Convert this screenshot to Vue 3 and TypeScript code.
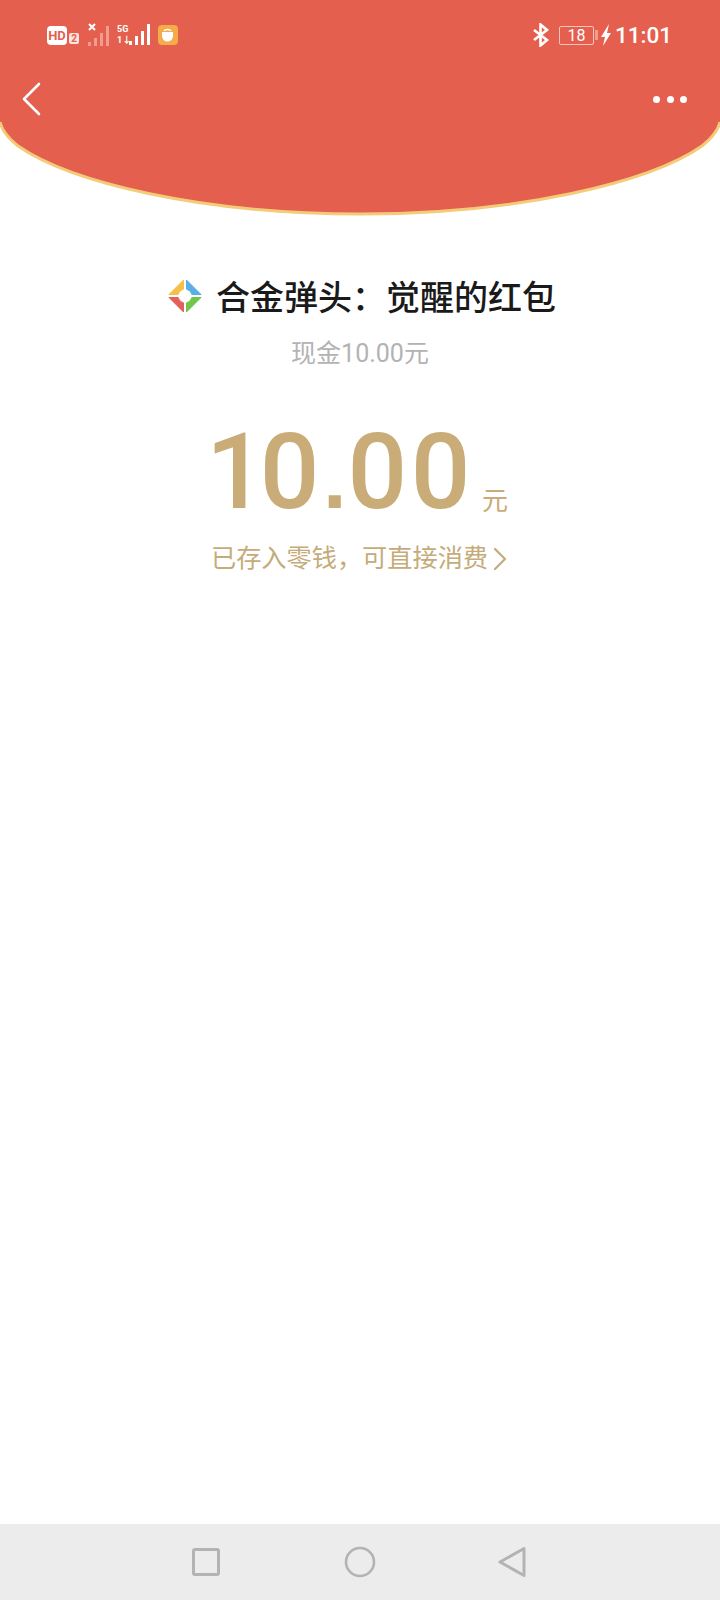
<template>
  <div class="page">
    <header class="hero">
      <svg class="hero-bg" width="720" height="218" viewBox="0 0 720 218">
        <path d="M0 0H720V122C718 130 712 138 702 146C650 182 520 214 360 214C200 214 70 182 18 146C8 138 2 130 0 122Z" fill="#e55f4e" />
        <path d="M0 122C2 130 8 138 18 146C70 182 200 214 360 214C520 214 650 182 702 146C712 138 718 130 720 122" fill="none" stroke="#f3cb79" stroke-width="3" />
      </svg>

      <!-- 状态栏 -->
      <div class="status">
        <div class="status-left">
          <span class="hd">HD</span>
          <span class="hd-sub">2</span>
          <svg class="signal" width="26" height="24" viewBox="0 0 26 24">
            <path d="M3 1l6 6M9 1L3 7" stroke="#fff" stroke-width="2" />
            <g fill="#f29c90">
              <rect x="2" y="19" width="3" height="4" />
              <rect x="8" y="15" width="3" height="8" />
              <rect x="14" y="10" width="3" height="13" />
              <rect x="20" y="3" width="3" height="20" />
            </g>
          </svg>
          <span class="net">
            <span class="net-text">5G<br />1↓</span>
            <svg width="22" height="22" viewBox="0 0 22 22">
              <g fill="#fff">
                <rect x="0" y="17" width="3" height="4" />
                <rect x="6" y="12" width="3" height="9" />
                <rect x="12" y="7" width="3" height="14" />
                <rect x="18" y="0" width="3" height="21" />
              </g>
            </svg>
          </span>
          <svg class="cup" width="20" height="20" viewBox="0 0 20 20">
            <rect width="20" height="20" rx="4" fill="#f4ab4a" />
            <path d="M4 7h11v4a5.500 5.500 0 0 1-11 0z" fill="#fff" />
            <path d="M6 6c1-2 6-2 7 0" stroke="#fff" stroke-width="1.500" fill="none" />
          </svg>
        </div>
        <div class="status-right">
          <svg width="18" height="24" viewBox="0 0 18 24">
            <path d="M2 7l13 10-6.500 5.500V1.500L15 7 2 17" fill="none" stroke="#fff" stroke-width="2.600" />
          </svg>
          <span class="battery">18</span>
          <span class="battery-cap"></span>
          <svg width="12" height="24" viewBox="0 0 12 24">
            <path d="M9 1L1 14h4l-2 9 8-13H7z" fill="#fff" />
          </svg>
          <span class="time">11:01</span>
        </div>
      </div>

      <!-- 导航 -->
      <div class="nav">
        <svg width="20" height="34" viewBox="0 0 20 34">
          <path d="M17 2L2 17l15 15" fill="none" stroke="#fff" stroke-width="2.600" stroke-linecap="round" stroke-linejoin="round" />
        </svg>
        <div class="dots"><i></i><i></i><i></i></div>
      </div>
    </header>

    <main class="main">
      <div class="title-row">
        <svg class="logo" width="34" height="34" viewBox="0 0 34 34">
          <g stroke-width="1" stroke-linejoin="round">
            <path d="M15.500 1V10.160A7 7 0 0 0 10.160 15.500H1Z" fill="#f5c04a" stroke="#f5c04a" />
            <path d="M18.500 1L33 15.500H23.840A7 7 0 0 0 18.500 10.160Z" fill="#5aaee6" stroke="#5aaee6" />
            <path d="M1 18.500H10.160A7 7 0 0 0 15.500 23.840V33Z" fill="#e3605f" stroke="#e3605f" />
            <path d="M18.500 33V23.840A7 7 0 0 0 23.840 18.500H33Z" fill="#71c64a" stroke="#71c64a" />
          </g>
        </svg>
        <h1 class="title">合金弹头：觉醒的红包</h1>
      </div>
      <p class="sub">现金10.00元</p>
      <div class="amount">
        <span class="num"><span class="one">1</span>0<span class="dot">.</span>00</span>
        <span class="unit">元</span>
      </div>
      <div class="note">
        <span>已存入零钱，可直接消费</span>
        <svg width="14" height="24" viewBox="0 0 14 24">
          <path d="M2 2l10 10L2 22" fill="none" stroke="#c5ab79" stroke-width="2.200" stroke-linecap="round" stroke-linejoin="round" />
        </svg>
      </div>
    </main>

    <footer class="navbar">
      <svg width="28" height="28" viewBox="0 0 28 28">
        <rect x="1.500" y="1.500" width="25" height="25" rx="1.500" fill="none" stroke="#b3b3b3" stroke-width="3" />
      </svg>
      <svg width="32" height="32" viewBox="0 0 32 32">
        <circle cx="16" cy="16" r="14" fill="none" stroke="#b3b3b3" stroke-width="2.600" />
      </svg>
      <svg class="back" width="28" height="32" viewBox="0 0 28 32">
        <path d="M26 2.500V29.500L2 16Z" fill="none" stroke="#b3b3b3" stroke-width="3" stroke-linejoin="round" />
      </svg>
    </footer>
  </div>
</template>

<script setup lang="ts">
</script>

<style scoped>
.page {
  width: 720px;
  min-height: 1600px;
  display: flex;
  flex-direction: column;
  background: #fff;
  font-family: Roboto, "Noto Sans CJK SC", sans-serif;
}

.hero {
  position: relative;
  height: 216px;
}

.hero-bg {
  position: absolute;
  left: 0;
  top: 0;
}

.status {
  position: relative;
  height: 24px;
  padding: 23px 48px 0 47px;
  display: flex;
  justify-content: space-between;
  align-items: center;
}

.status-left,
.status-right {
  display: flex;
  align-items: center;
}

.hd {
  width: 20px;
  height: 19px;
  border-radius: 4px;
  background: #fff;
  color: #e55f4e;
  font-size: 13px;
  font-weight: 700;
  line-height: 19px;
  text-align: center;
}

.hd-sub {
  width: 10px;
  height: 11px;
  margin: 6px 7px 0 2px;
  border-radius: 2px;
  background: #fbe3df;
  color: #e55f4e;
  font-size: 10px;
  font-weight: 700;
  line-height: 11px;
  text-align: center;
}

.net {
  display: flex;
  align-items: flex-end;
  margin-left: 5px;
  color: #fff;
}

.net-text {
  font-size: 9px;
  font-weight: 700;
  line-height: 11px;
  width: 12px;
  white-space: nowrap;
}

.cup {
  margin-left: 7px;
}

.status-right svg:first-child {
  margin-right: 9px;
}

.battery {
  width: 33px;
  height: 17px;
  border: 1px solid #f7c4bc;
  border-radius: 2px;
  color: #fff;
  font-size: 16px;
  line-height: 17px;
  text-align: center;
}

.battery-cap {
  width: 3px;
  height: 10px;
  margin: 0 2px 0 1px;
  background: #f29c90;
}

.time {
  margin-left: 3px;
  color: #fff;
  font-size: 22.500px;
  font-weight: 500;
}

.nav {
  position: relative;
  margin-top: 35px;
  padding: 0 22px;
  height: 34px;
  display: flex;
  justify-content: space-between;
  align-items: center;
}

.dots {
  display: flex;
  gap: 6.500px;
  margin-right: 11px;
}

.dots i {
  width: 7px;
  height: 7px;
  border-radius: 50%;
  background: #fff;
}

.main {
  flex: 1;
  display: flex;
  flex-direction: column;
  align-items: center;
  padding-top: 63px;
}

.title-row {
  display: flex;
  align-items: center;
  gap: 14px;
  height: 38px;
  padding-left: 4px;
}

.logo {
  margin-top: -4px;
}

.title {
  margin: 0;
  color: #1a1a1a;
  font-size: 34px;
  font-weight: 500;
  line-height: 38px;
}

.sub {
  margin: 18px 0 0;
  color: #b3b3b3;
  font-size: 25px;
  line-height: 38px;
}

.amount {
  display: flex;
  align-items: flex-end;
  margin-top: 38px;
  padding-right: 6px;
  color: #c9ac77;
}

.num {
  font-size: 105px;
  font-weight: 500;
  line-height: 124px;
  letter-spacing: 3.500px;
}

.one {
  letter-spacing: -6px;
}

.dot {
  font-family: "Liberation Sans", sans-serif;
  font-size: 85px;
  font-weight: 700;
  letter-spacing: 1px;
}

.unit {
  margin: 0 0 22px 8px;
  font-size: 26px;
  line-height: 36px;
}

.note {
  display: flex;
  align-items: center;
  gap: 5px;
  padding-right: 2px;
  color: #c5ab79;
  font-size: 25.200px;
  line-height: 36px;
}

.navbar {
  height: 76px;
  padding-left: 192px;
  display: flex;
  align-items: center;
  gap: 124px;
  background: #ececec;
}

.back {
  margin-left: -2px;
}
</style>

<style>
body {
  margin: 0;
}
</style>
